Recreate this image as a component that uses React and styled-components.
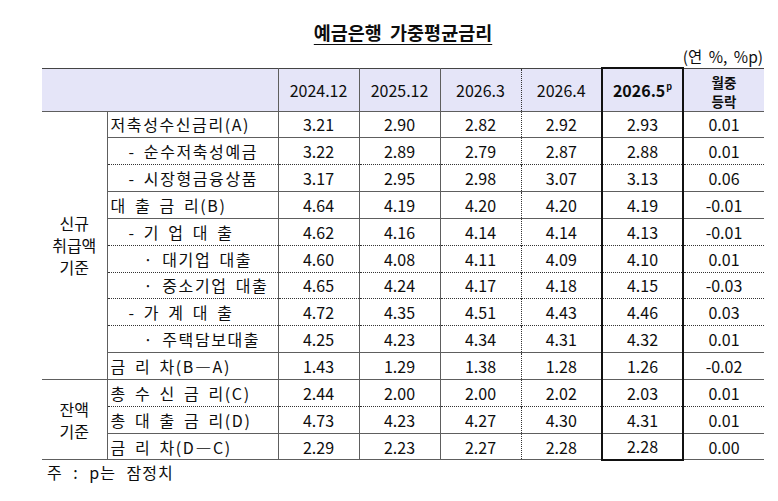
import React from "react";
import styled, { createGlobalStyle } from "styled-components";

const GlobalStyle = createGlobalStyle`
  html, body {
    margin: 0;
    padding: 0;
    background: #ffffff;
  }
  body {
    font-family: "Noto Sans CJK KR", "Noto Sans", sans-serif;
    color: #0d0d0d;
  }
`;

const LINE = "#5e5e5e";

const columns = ["2024.12", "2025.12", "2026.3", "2026.4", "2026.5", "월중등락"];

const rows = [
  { group: "new", label: "저축성수신금리(A)", indent: 0, sep: "solid", vals: ["3.21", "2.90", "2.82", "2.92", "2.93", "0.01"] },
  { group: "new", label: "- 순수저축성예금", indent: 18, sep: "dotted", vals: ["3.22", "2.89", "2.79", "2.87", "2.88", "0.01"] },
  { group: "new", label: "- 시장형금융상품", indent: 18, sep: "solid", vals: ["3.17", "2.95", "2.98", "3.07", "3.13", "0.06"] },
  { group: "new", label: "대 출 금 리(B)", indent: 0, sep: "solid", vals: ["4.64", "4.19", "4.20", "4.20", "4.19", "-0.01"] },
  { group: "new", label: "- 기 업 대 출", indent: 18, sep: "dotted", vals: ["4.62", "4.16", "4.14", "4.14", "4.13", "-0.01"] },
  { group: "new", label: "· 대기업 대출", indent: 33, sep: "dotted", vals: ["4.60", "4.08", "4.11", "4.09", "4.10", "0.01"] },
  { group: "new", label: "· 중소기업 대출", indent: 33, sep: "dotted", vals: ["4.65", "4.24", "4.17", "4.18", "4.15", "-0.03"] },
  { group: "new", label: "- 가 계 대 출", indent: 18, sep: "dotted", vals: ["4.72", "4.35", "4.51", "4.43", "4.46", "0.03"] },
  { group: "new", label: "· 주택담보대출", indent: 33, sep: "solid", vals: ["4.25", "4.23", "4.34", "4.31", "4.32", "0.01"] },
  { group: "new", label: "금 리 차(B―A)", indent: 0, sep: "solid", vals: ["1.43", "1.29", "1.38", "1.28", "1.26", "-0.02"] },
  { group: "bal", label: "총 수 신 금 리(C)", indent: 0, sep: "dotted", vals: ["2.44", "2.00", "2.00", "2.02", "2.03", "0.01"] },
  { group: "bal", label: "총 대 출 금 리(D)", indent: 0, sep: "solid", vals: ["4.73", "4.23", "4.27", "4.30", "4.31", "0.01"] },
  { group: "bal", label: "금 리 차(D―C)", indent: 0, sep: "solid", vals: ["2.29", "2.23", "2.27", "2.28", "2.28", "0.00"] },
];

const groups = {
  new: { lines: ["신규", "취급액", "기준"], span: 10 },
  bal: { lines: ["잔액", "기준"], span: 3 },
};

// right border of each data column
const colRight = [
  `1px solid ${LINE}`,
  `1px solid ${LINE}`,
  `1px dotted #333`,
  `2px solid #111`,
  `2px solid #111`,
  "none",
];

const Page = styled.div`
  width: 722px;
  padding: 20px 14px 0 42px;
`;

const Title = styled.h1`
  margin: 0;
  text-align: center;
  font-size: 18.5px;
  font-weight: 700;
  line-height: 24px;
  word-spacing: 4px;
  text-decoration: underline;
  text-underline-offset: 4px;
  text-decoration-thickness: 1px;
`;

const Unit = styled.div`
  text-align: right;
  font-size: 15.5px;
  line-height: 22px;
  margin-top: 1px;
  padding-right: 1px;
  word-spacing: 3px;
`;

const Table = styled.table`
  width: 722px;
  table-layout: fixed;
  border-collapse: collapse;
  font-size: 16px;
  border-top: 1.5px solid #444;
  border-bottom: 1px solid ${LINE};
`;

const HeadRow = styled.tr`
  height: 43px;
  background: #e5e5f8;
  border-bottom: 1px solid ${LINE};
`;

const HeadCell = styled.th`
  padding: 0;
  font-weight: ${(p) => (p.$strong ? 700 : 400)};
  text-align: center;
  border-right: ${(p) => p.$right};
  border-left: ${(p) => p.$left || "none"};
  border-top: ${(p) => (p.$left ? "2px solid #111" : "none")};
`;

const Stack = styled.span`
  display: inline-flex;
  flex-direction: column;
  align-items: center;
  font-weight: 700;
  font-size: 13.5px;
  line-height: 19px;
`;

const StackLine = styled.span`
  display: block;
  height: 19px;
`;

const Sup = styled.sup`
  font-size: 9px;
  vertical-align: 7px;
  margin-left: 1px;
`;

const BodyRow = styled.tr`
  height: 26.85px;
  border-bottom: ${(p) => (p.$sep === "solid" ? `1px solid ${LINE}` : "1px dotted #333")};
`;

const GroupCell = styled.td`
  padding: 0;
  text-align: center;
  vertical-align: middle;
  line-height: 22px;
  border-right: 1px solid ${LINE};
  border-bottom: 1px solid ${LINE};
`;

const LabelCell = styled.td`
  padding: 0 0 0 ${(p) => 3 + p.$indent}px;
  white-space: nowrap;
  word-spacing: 3px;
  letter-spacing: 1.6px;
  border-right: 1px solid ${LINE};
`;

const ValueCell = styled.td`
  padding: 0;
  text-align: center;
  border-right: ${(p) => p.$right};
  border-left: ${(p) => p.$left || "none"};
  border-bottom: ${(p) => (p.$last && p.$boxed ? "2px solid #111" : undefined)};
`;

const Note = styled.div`
  font-size: 16px;
  line-height: 22px;
  padding-left: 5px;
  word-spacing: 6px;
  letter-spacing: 1px;
`;

const App = () => {
  return (
    <>
      <GlobalStyle />
      <Page>
        <Title>예금은행 가중평균금리</Title>
        <Unit>(연 %, %p)</Unit>
        <Table>
          <colgroup>
            <col style={{ width: 65 }} />
            <col style={{ width: 171 }} />
            {columns.map((c) => (
              <col key={c} style={{ width: 81 }} />
            ))}
          </colgroup>
          <thead>
            <HeadRow>
              <HeadCell colSpan={2} $right={`1px solid ${LINE}`} />
              {columns.map((c, i) => (
                <HeadCell
                  key={c}
                  $right={colRight[i]}
                  $left={i === 4 ? "2px solid #111" : undefined}
                  $strong={i === 4}
                >
                  {i === 4 ? (
                    <>
                      2026.5<Sup>p</Sup>
                    </>
                  ) : i === 5 ? (
                    <Stack>
                      <StackLine>월중</StackLine>
                      <StackLine>등락</StackLine>
                    </Stack>
                  ) : (
                    c
                  )}
                </HeadCell>
              ))}
            </HeadRow>
          </thead>
          <tbody>
            {rows.map((r, ri) => {
              const first = ri === 0 || rows[ri - 1].group !== r.group;
              const g = groups[r.group];
              return (
                <BodyRow key={r.label + ri} $sep={r.sep}>
                  {first && (
                    <GroupCell rowSpan={g.span}>
                      {g.lines.map((l, li) => (
                        <React.Fragment key={l}>
                          {li > 0 && <br />}
                          {l}
                        </React.Fragment>
                      ))}
                    </GroupCell>
                  )}
                  <LabelCell $indent={r.indent}>{r.label}</LabelCell>
                  {r.vals.map((v, vi) => (
                    <ValueCell
                      key={vi}
                      $right={colRight[vi]}
                      $left={vi === 4 ? "2px solid #111" : undefined}
                      $boxed={vi === 4}
                      $last={ri === rows.length - 1}
                    >
                      {v}
                    </ValueCell>
                  ))}
                </BodyRow>
              );
            })}
          </tbody>
        </Table>
        <Note>주 : p는 잠정치</Note>
      </Page>
    </>
  );
};

export default App;
